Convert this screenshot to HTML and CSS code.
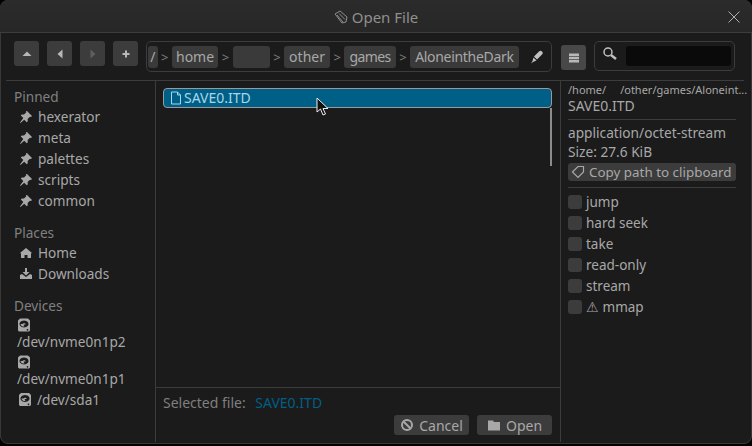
FILE: index.html
```html
<!DOCTYPE html>
<html lang="en">
<head>
    <meta charset="UTF-8">
    <title>Open File</title>
    <link rel="stylesheet" href="styles.css">
</head>
<body>
    <svg class="defs" width="0" height="0">
        <symbol id="pin" viewBox="0 0 14 14"><path d="M8 1l5 5-1 1-1-.3-2.400 2.400.2 2.200-1 1-2.600-2.600L1.500 13 1 12.500 4.300 8 1.800 5.400l1-1 2.200.2L7.300 2.300 7 1z" fill="currentColor"/></symbol>
        <symbol id="disk" viewBox="0 0 14 14"><path fill-rule="evenodd" d="M3 0h8l2 2v10l-1 1H2l-1-1V2zM7 2a4.500 3.500 0 1 0 .01 0zM3.500 5.500a3.500 2.500 0 0 0 4 2.500l-1-2h2a1.500 1 0 1 0-3-.5zM10.500 10.500a.8.8 0 1 0 .01 0z" fill="currentColor"/></symbol>
    </svg>
    <div class="window">
        <header class="titlebar">
            <span class="title">
                <svg class="title-icon" viewBox="0 0 14 14"><path d="M1 4l5-3 7 6-1 5-4 1zM3 5l6 7M5 3.500l6 6" fill="none" stroke="currentColor"/></svg>
                Open File
            </span>
            <svg class="close" viewBox="0 0 12 12"><path d="M.5.500l11 11M11.500.500l-11 11" stroke="currentColor" fill="none"/></svg>
        </header>

        <div class="toolbar">
            <button class="nav"><svg viewBox="0 0 10 10"><path d="M5 2.500l4.500 4.500H.5z" fill="currentColor"/></svg></button>
            <button class="nav"><svg viewBox="0 0 10 10"><path d="M7.500.500v9L2.500 5z" fill="currentColor"/></svg></button>
            <button class="nav off"><svg viewBox="0 0 10 10"><path d="M2.500.500v9L7.500 5z" fill="currentColor"/></svg></button>
            <button class="nav"><svg viewBox="0 0 10 10"><path d="M4 1.500h2V4h2.500v2H6v2.500H4V6H1.500V4H4z" fill="currentColor"/></svg></button>
            <div class="path">
                <span class="crumb root">/</span><i>&gt;</i>
                <span class="crumb narrow">home</span><i>&gt;</i>
                <span class="crumb blank"></span><i>&gt;</i>
                <span class="crumb">other</span><i>&gt;</i>
                <span class="crumb tight">games</span><i>&gt;</i>
                <span class="crumb long">AloneintheDark</span>
                <svg class="pen" viewBox="0 0 14 14"><path d="M9 1.500c1-1 2-1 3 0s1 2 0 3L7 9.500l-3-3zM3.500 7.500l3 3L3 12l-2 1.500L2.500 11z" fill="currentColor"/></svg>
            </div>
            <button class="nav list"><svg viewBox="0 0 12 12"><path d="M1 1.500h10v2.500H1zM1 4.800h10v2.400H1zM1 8h10v2.500H1z" fill="currentColor"/></svg></button>
            <div class="search">
                <svg viewBox="0 0 16 16"><circle cx="6" cy="6" r="4" fill="none" stroke="currentColor" stroke-width="1.500"/><path d="M9 9l5 4" stroke="currentColor" stroke-width="2.500"/></svg>
                <span class="search-input"></span>
            </div>
        </div>

        <div class="content">
            <aside class="sidebar">
                <h2>Pinned</h2>
                <div class="side-item"><svg><use href="#pin"/></svg>hexerator</div>
                <div class="side-item"><svg><use href="#pin"/></svg>meta</div>
                <div class="side-item"><svg><use href="#pin"/></svg>palettes</div>
                <div class="side-item"><svg><use href="#pin"/></svg>scripts</div>
                <div class="side-item"><svg><use href="#pin"/></svg>common</div>
                <h2>Places</h2>
                <div class="side-item"><svg viewBox="0 0 14 14"><path d="M7 2l6 5-1 .5V12H8.500V9h-3v3H2V7.500L1 7z" fill="currentColor"/></svg>Home</div>
                <div class="side-item"><svg viewBox="0 0 14 14"><path d="M6 1h2v4h2.500L7 8.500 3.500 5H6zM1 8l2-1 4 3 4-3 2 1v4H1z" fill="currentColor"/></svg>Downloads</div>
                <h2>Devices</h2>
                <div class="side-item wrap"><svg><use href="#disk"/></svg><span>/dev/nvme0n1p2</span></div>
                <div class="side-item wrap"><svg><use href="#disk"/></svg><span>/dev/nvme0n1p1</span></div>
                <div class="side-item device"><svg><use href="#disk"/></svg>/dev/sda1</div>
            </aside>

            <main class="center">
                <div class="files">
                    <div class="file-row">
                        <svg viewBox="0 0 14 14"><path d="M2.500 1h6l3 3v9h-9zM8.500 1v3h3" fill="none" stroke="currentColor"/></svg>
                        SAVE0.ITD
                    </div>
                    <span class="scrollbar"></span>
                </div>
                <footer class="footer">
                    <div class="selected">Selected file: <span>SAVE0.ITD</span></div>
                    <div class="actions">
                        <button class="action"><svg viewBox="0 0 14 14"><circle cx="7" cy="7" r="5" fill="none" stroke="currentColor" stroke-width="2"/><path d="M3.500 3.500l7 7" stroke="currentColor" stroke-width="2"/></svg>Cancel</button>
                        <button class="action"><svg viewBox="0 0 14 14"><path d="M1 2.500h5l1 1.500h6v8.500H1z" fill="currentColor"/></svg>Open</button>
                    </div>
                </footer>
            </main>

            <aside class="details">
                <div class="dir">/home/<b></b>/other/games/Aloneint...</div>
                <div class="name">SAVE0.ITD</div>
                <hr>
                <div class="info">application/octet-stream</div>
                <div class="info">Size: 27.6 KiB</div>
                <button class="copy"><svg viewBox="0 0 14 14"><path d="M1.500 7L7 1.500h5.500V7L7 12.500zM10 3.200v.1" fill="none" stroke="currentColor" stroke-width="1.200"/></svg>Copy path to clipboard</button>
                <hr>
                <label class="check"><span></span>jump</label>
                <label class="check"><span></span>hard seek</label>
                <label class="check"><span></span>take</label>
                <label class="check"><span></span>read-only</label>
                <label class="check"><span></span>stream</label>
                <label class="check"><span></span>⚠ mmap</label>
            </aside>
        </div>
    </div>
    <!-- pointeur de la souris -->
    <svg class="cursor" viewBox="0 0 14 20"><path d="M1 1v14l3.500-3 2.500 6 2.500-1-2.500-5.500H12z" fill="#111" stroke="#eee"/></svg>
</body>
</html>
```

FILE: styles.css
```css
* {
    box-sizing: border-box;
}

html, body {
    margin: 0;
    height: 100%;
    background: #000;
    overflow: hidden;
}

body {
    font-family: "Noto Sans", sans-serif;
    font-size: 14px;
    color: #a8a8a8;
    position: relative;
}

.defs {
    position: absolute;
}

button {
    font: inherit;
    color: inherit;
    border: none;
    padding: 0;
}

.window {
    width: 752px;
    height: 444px;
    background: #1b1b1b;
    border-radius: 8px;
    outline: 1px solid #383838;
    outline-offset: -1px;
    display: flex;
    flex-direction: column;
    overflow: hidden;
}

/* barre de titre */
.titlebar {
    height: 33px;
    flex: none;
    padding-top: 1px;
    background: linear-gradient(#2b2b2b, #272727);
    border-bottom: 1px solid #3c3c3c;
    display: flex;
    align-items: center;
    justify-content: center;
    position: relative;
}

.title {
    font-size: 15px;
    color: #8f8f8f;
    display: flex;
    align-items: center;
    gap: 4px;
}

.title-icon {
    width: 14px;
    height: 14px;
}

.close {
    position: absolute;
    right: 12px;
    top: 11px;
    width: 12px;
    height: 12px;
    color: #b0b0b0;
}

/* barre d'outils */
.toolbar {
    height: 48px;
    flex: none;
    margin: 0 8px 0 6px;
    padding: 8px 0 0 8px;
    border-bottom: 1px solid #3c3c3c;
    display: flex;
    align-items: flex-start;
}

.nav {
    width: 25px;
    height: 25px;
    flex: none;
    margin-right: 8px;
    background: #3c3c3c;
    border-radius: 3px;
    display: flex;
    align-items: center;
    justify-content: center;
    color: #b8b8b8;
}

.nav svg {
    width: 10px;
    height: 10px;
}

.nav.off {
    color: #5f5f5f;
}

.nav.list {
    margin: 4px 8px 0 9px;
    background: #484848;
}

.nav.list svg {
    width: 12px;
    height: 12px;
}

.path {
    width: 406px;
    height: 31px;
    flex: none;
    border: 1px solid #3c3c3c;
    border-radius: 5px;
    padding: 0 1px;
    display: flex;
    align-items: center;
}

.path i {
    font-style: normal;
    width: 14.5px;
    flex: none;
    text-align: center;
    color: #808080;
    font-size: 13px;
}

.crumb {
    height: 22px;
    line-height: 22px;
    padding: 0 5px;
    background: #3a3a3a;
    border-radius: 3px;
}

.crumb.root {
    width: 9.5px;
    padding: 0;
    text-align: center;
}

.crumb.narrow {
    padding: 0 4px;
}

.crumb.blank {
    width: 37px;
}

.crumb.tight {
    letter-spacing: -0.6px;
}

.crumb.long {
    letter-spacing: -0.3px;
}

.pen {
    width: 14px;
    height: 14px;
    margin-left: 11px;
    color: #c0c0c0;
}

.search {
    width: 141px;
    height: 30px;
    flex: none;
    border: 1px solid #3c3c3c;
    border-radius: 5px;
    display: flex;
    align-items: center;
    padding: 0 3px 0 7px;
    color: #c0c0c0;
}

.search svg {
    width: 16px;
    height: 16px;
    margin-bottom: 4px;
}

.search-input {
    width: 105px;
    height: 20px;
    margin-left: 8px;
    background: #0a0a0a;
    border-radius: 3px;
}

/* contenu */
.content {
    flex: 1;
    display: flex;
    min-height: 0;
}

.sidebar {
    width: 156px;
    flex: none;
    border-right: 1px solid #3c3c3c;
    padding: 6px 0 0 14px;
    margin-bottom: 2px;
    font-size: 13.6px;
}

.sidebar h2 {
    font-size: 13.6px;
    font-weight: normal;
    color: #808080;
    margin: 12px 0 0;
    height: 19px;
    line-height: 20px;
}

.sidebar h2:first-child {
    margin-top: 0;
}

.side-item {
    height: 21px;
    line-height: 21px;
    display: flex;
    align-items: center;
    padding-left: 5px;
}

.side-item svg {
    width: 14px;
    height: 14px;
    margin-right: 5px;
    flex: none;
}

.side-item.wrap {
    height: 37px;
    display: block;
    padding: 1px 0 0 3px;
    line-height: 18px;
}

.side-item.wrap svg {
    display: block;
    height: 17px;
    padding-top: 2px;
}

.side-item.wrap span {
    display: block;
}

.side-item.device {
    padding-left: 4px;
}

.center {
    width: 405px;
    flex: none;
    border-right: 1px solid #3c3c3c;
    display: flex;
    flex-direction: column;
    margin-bottom: 2px;
}

.files {
    flex: 1;
    padding: 7px 8px 0 7px;
    position: relative;
}

.file-row {
    height: 20px;
    background: #005f87;
    border: 1px solid #9a9a9a;
    border-radius: 4px;
    color: #a9d6ea;
    display: flex;
    align-items: center;
    padding: 0 0 1px 5px;
    gap: 1px;
}

.file-row svg {
    width: 14px;
    height: 14px;
}

.scrollbar {
    position: absolute;
    right: 8px;
    top: 27px;
    width: 2px;
    height: 58px;
    background: #8c8c8c;
}

.footer {
    height: 55px;
    flex: none;
    border-top: 1px solid #3c3c3c;
    padding: 6px 8px 0 7px;
}

.selected {
    color: #7f7f7f;
    height: 21px;
    line-height: 18px;
}

.selected span {
    color: #005f87;
    margin-left: 6px;
}

.actions {
    display: flex;
    justify-content: flex-end;
    gap: 8px;
}

.action {
    width: 75px;
    height: 20px;
    background: #3c3c3c;
    border-radius: 3px;
    display: flex;
    align-items: center;
    justify-content: center;
    gap: 5px;
}

.action svg {
    width: 14px;
    height: 14px;
}

/* panneau de droite */
.details {
    flex: 1;
    padding: 1px 16px 0 7px;
    min-width: 0;
}

.dir {
    font-size: 11px;
    height: 15px;
    line-height: 15px;
    white-space: nowrap;
}

.dir b {
    display: inline-block;
    width: 14px;
}

.name {
    height: 16px;
    line-height: 17px;
}

.details hr {
    border: none;
    border-top: 1px solid #3c3c3c;
    margin: 6px 0 3px;
}

.info {
    height: 19px;
    line-height: 19px;
    font-size: 13.7px;
}

.copy {
    width: 168px;
    height: 18px;
    margin-top: 2px;
    background: #3c3c3c;
    border-radius: 3px;
    display: flex;
    align-items: center;
    padding-left: 3px;
    gap: 4px;
    white-space: nowrap;
    font-size: 13.4px;
}

.copy svg {
    width: 14px;
    height: 14px;
    flex: none;
}

.check {
    height: 21px;
    display: flex;
    align-items: center;
    gap: 4px;
    font-size: 13.5px;
}

.check span {
    width: 14px;
    height: 14px;
    background: #3c3c3c;
    border-radius: 3px;
    flex: none;
}

.cursor {
    position: absolute;
    left: 316px;
    top: 97px;
    width: 14px;
    height: 20px;
}
```
